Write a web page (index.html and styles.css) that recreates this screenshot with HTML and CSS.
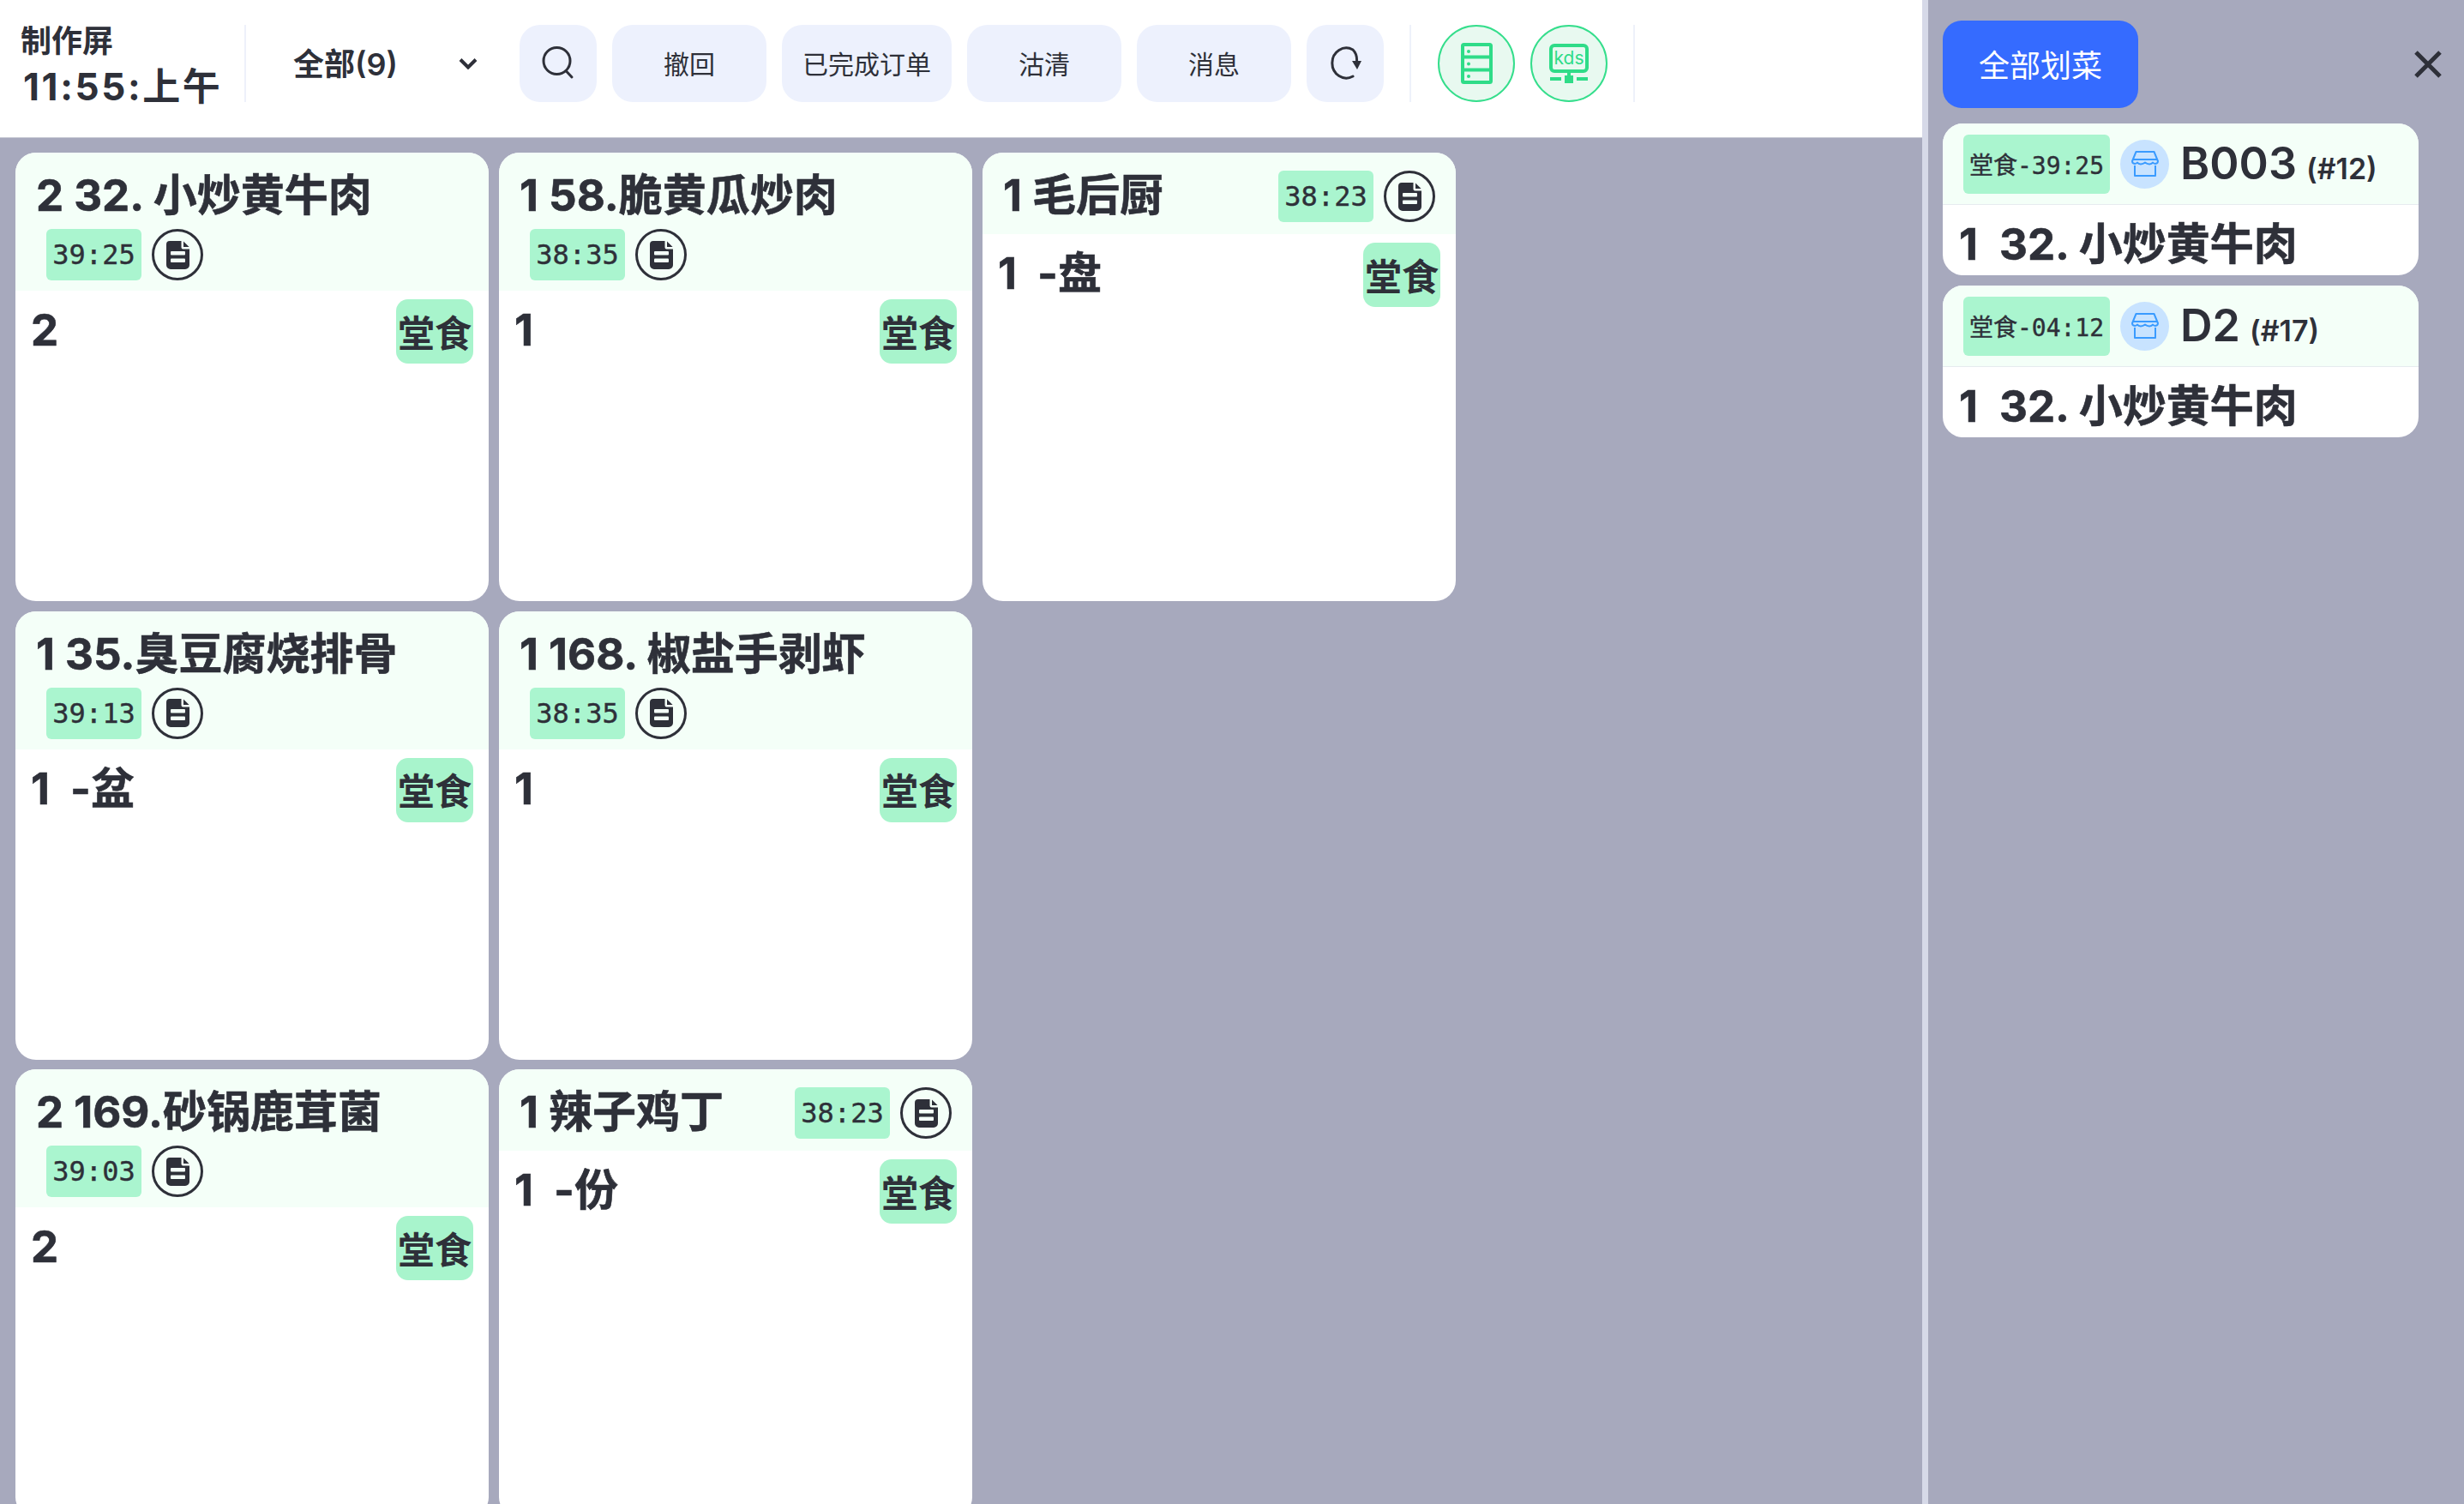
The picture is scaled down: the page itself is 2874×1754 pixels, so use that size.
FILE: index.html
```html
<!DOCTYPE html>
<html lang="zh-CN">
<head>
<meta charset="utf-8">
<title>制作屏</title>
<link rel="stylesheet" href="styles.css">
</head>
<body>
<svg class="defs" width="0" height="0" aria-hidden="true">
  <symbol id="doc" viewBox="0 0 27 33">
    <path fill="currentColor" d="M4 0H17.5V7.5a2 2 0 0 0 2 2H27V28a5 5 0 0 1-5 5H5a5 5 0 0 1-5-5V4a4 4 0 0 1 4-4Z"/>
    <path fill="currentColor" d="M20 0.5 26.6 7H20Z"/>
    <rect x="5" y="12" width="17" height="4.5" rx="1" fill="#f4fff8"/>
    <rect x="5" y="20.5" width="17" height="4.5" rx="1" fill="#f4fff8"/>
  </symbol>
  <symbol id="store" viewBox="0 0 32 30">
    <path fill="none" stroke="currentColor" stroke-width="2" stroke-linejoin="round" d="M5.5 1H26.5L31 12C31 15 27 16 25 13.5 23.500 16 19 16 16 13.500 13 16 8.500 16 7 13.500 5 16 1 15 1 12Z"/>
    <path fill="none" stroke="currentColor" stroke-width="2" d="M1.500 10H30.500"/>
    <path fill="none" stroke="currentColor" stroke-width="2" stroke-linejoin="round" d="M4 17V29H28V17"/>
  </symbol>
</svg>
<div class="app">
  <main class="main">
    <header class="topbar">
      <div class="clock">
        <div class="clock-title">制作屏</div>
        <div class="clock-time">11:55:上午</div>
      </div>
      <div class="rule"></div>
      <div class="filter">
        <span>全部(9)</span>
        <svg class="chevron" viewBox="0 0 24 14" width="24" height="14"><path d="M3 2.500 12 11.500 21 2.500" fill="none" stroke="currentColor" stroke-width="4"/></svg>
      </div>
      <div class="actions">
        <button class="btn btn-icon"><svg viewBox="0 0 40 40" width="40" height="40"><circle cx="18.500" cy="18" r="15.500" fill="none" stroke="currentColor" stroke-width="3"/><path d="M29 29.500 36 37" fill="none" stroke="currentColor" stroke-width="3" stroke-linecap="round"/></svg></button>
        <button class="btn">撤回</button>
        <button class="btn btn-wide">已完成订单</button>
        <button class="btn">沽清</button>
        <button class="btn">消息</button>
        <button class="btn btn-icon"><svg viewBox="0 0 40 40" width="40" height="40"><path d="M29 36A16.500 17.500 0 1 1 29 5C32 8 34 13 33.500 19" fill="none" stroke="currentColor" stroke-width="3" stroke-linecap="round"/><path d="M28 18H39L34 28Z" fill="currentColor"/></svg></button>
      </div>
      <div class="rule rule-mid"></div>
      <div class="modes">
        <button class="mode"><svg viewBox="0 0 37 48" width="37" height="48"><rect x="2" y="2" width="33" height="44" rx="1.500" fill="none" stroke="currentColor" stroke-width="4"/><path d="M2 16.500H35M2 31.500H35" stroke="currentColor" stroke-width="4"/><circle cx="9" cy="10" r="2" fill="currentColor"/><circle cx="9" cy="24.500" r="2" fill="currentColor"/><circle cx="9" cy="39" r="2" fill="currentColor"/></svg></button>
        <button class="mode"><svg viewBox="0 0 46 46" width="46" height="46"><rect x="2" y="2" width="42" height="30" rx="4" fill="none" stroke="currentColor" stroke-width="4"/><text x="23" y="24" class="kds">kds</text><path d="M23 32V40" stroke="currentColor" stroke-width="4"/><rect x="18" y="37" width="10" height="9" fill="currentColor"/><path d="M1 41H14M32 41H45" stroke="currentColor" stroke-width="4"/></svg></button>
      </div>
      <div class="rule rule-end"></div>
    </header>
    <div class="board">
      <div class="col">
        <article class="card">
          <div class="card-head stacked"><div class="title">2 32. 小炒黄牛肉</div><div class="meta"><span class="timer">39:25</span><span class="note"><svg><use href="#doc"/></svg></span></div></div>
          <div class="card-row"><span class="qty">2</span><span class="pill">堂食</span></div>
        </article>
        <article class="card">
          <div class="card-head stacked"><div class="title">1 35.臭豆腐烧排骨</div><div class="meta"><span class="timer">39:13</span><span class="note"><svg><use href="#doc"/></svg></span></div></div>
          <div class="card-row"><span class="qty"><span class="count">1</span> -盆</span><span class="pill">堂食</span></div>
        </article>
        <article class="card">
          <div class="card-head stacked"><div class="title">2 169.砂锅鹿茸菌</div><div class="meta"><span class="timer">39:03</span><span class="note"><svg><use href="#doc"/></svg></span></div></div>
          <div class="card-row"><span class="qty">2</span><span class="pill">堂食</span></div>
        </article>
      </div>
      <div class="col">
        <article class="card">
          <div class="card-head stacked"><div class="title">1 58.脆黄瓜炒肉</div><div class="meta"><span class="timer">38:35</span><span class="note"><svg><use href="#doc"/></svg></span></div></div>
          <div class="card-row"><span class="qty">1</span><span class="pill">堂食</span></div>
        </article>
        <article class="card">
          <div class="card-head stacked"><div class="title">1 168. 椒盐手剥虾</div><div class="meta"><span class="timer">38:35</span><span class="note"><svg><use href="#doc"/></svg></span></div></div>
          <div class="card-row"><span class="qty">1</span><span class="pill">堂食</span></div>
        </article>
        <article class="card">
          <div class="card-head inline"><div class="title">1 辣子鸡丁</div><div class="meta"><span class="timer">38:23</span><span class="note"><svg><use href="#doc"/></svg></span></div></div>
          <div class="card-row"><span class="qty"><span class="count">1</span> -份</span><span class="pill">堂食</span></div>
        </article>
      </div>
      <div class="col">
        <article class="card">
          <div class="card-head inline"><div class="title">1 毛后厨</div><div class="meta"><span class="timer">38:23</span><span class="note"><svg><use href="#doc"/></svg></span></div></div>
          <div class="card-row"><span class="qty"><span class="count">1</span> -盘</span><span class="pill">堂食</span></div>
        </article>
      </div>
    </div>
  </main>
  <aside class="side">
    <div class="side-top">
      <button class="serve-all">全部划菜</button>
      <svg class="close" viewBox="0 0 32 32" width="32" height="32"><path d="M2 2 30 30M30 2 2 30" fill="none" stroke="currentColor" stroke-width="5"/></svg>
    </div>
    <section class="ticket">
      <div class="ticket-head"><span class="ticket-tag">堂食-39:25</span><span class="store"><svg><use href="#store"/></svg></span><span class="table">B003</span><span class="seq">(#12)</span></div>
      <div class="ticket-body"><span class="ticket-count">1</span> 32. 小炒黄牛肉</div>
    </section>
    <section class="ticket">
      <div class="ticket-head"><span class="ticket-tag">堂食-04:12</span><span class="store"><svg><use href="#store"/></svg></span><span class="table">D2</span><span class="seq">(#17)</span></div>
      <div class="ticket-body"><span class="ticket-count">1</span> 32. 小炒黄牛肉</div>
    </section>
  </aside>
</div>
</body>
</html>
```
FILE: styles.css
```css
* { box-sizing: border-box; }
html, body { margin: 0; height: 100%; }
body {
  overflow: hidden;
  background: #a7a9bd;
  color: #2e3039;
  font-family: Inter, "Noto Sans CJK SC", sans-serif;
}
.defs { position: absolute; }
button { font: inherit; color: inherit; border: 0; padding: 0; }

.app { display: flex; height: 1754px; overflow: hidden; }
.main { width: 2242px; flex: none; display: flex; flex-direction: column; overflow: hidden; }

.topbar {
  height: 161px;
  flex: none;
  display: flex;
  align-items: center;
  background: #fff;
  border-bottom: 1px solid #c5c7d3;
  padding-bottom: 12px;
}
.clock { width: 285px; padding: 3px 0 0 24px; font-weight: 700; }
.clock-title { font-size: 36px; line-height: 48px; }
.clock-time { font-size: 44px; line-height: 54px; padding: 2px 0 0 3px; letter-spacing: 2.600px; font-weight: 700; white-space: nowrap; }
.rule { width: 2px; height: 90px; flex: none; background: #eef1fa; }
.filter {
  width: 319px;
  height: 90px;
  flex: none;
  display: flex;
  align-items: center;
  justify-content: space-between;
  padding: 0 48px 0 55px;
  font-size: 36px;
  font-weight: 600;
}
.filter span { position: relative; top: -2px; }
.chevron { flex: none; }
.actions { display: flex; gap: 18px; }
.btn {
  width: 180px;
  height: 90px;
  border-radius: 24px;
  background: #edf1fd;
  font-size: 30px;
  padding-bottom: 2px;
  display: flex;
  align-items: center;
  justify-content: center;
}
.btn-icon { width: 90px; }
.btn-wide { width: 198px; }
.rule-mid { margin-left: 30px; }
.modes { display: flex; gap: 18px; margin-left: 31px; }
.mode {
  width: 90px;
  height: 90px;
  border-radius: 50%;
  background: #e8f9f0;
  border: 2px solid #35de8c;
  color: #2fdc88;
  display: flex;
  align-items: center;
  justify-content: center;
}
.kds { font-family: Inter, sans-serif; font-size: 21px; fill: currentColor; text-anchor: middle; }
.rule-end { margin-left: 30px; }

.board { display: flex; gap: 12px; padding: 17px 18px 0; align-items: flex-start; }
.col { width: 552px; display: flex; flex-direction: column; gap: 11.500px; flex: none; }
.card { height: 523px; flex: none; border-radius: 24px; background: #fff; overflow: hidden; }
.card-head { background: #f4fff8; }
.stacked { height: 161px; padding: 19px 0 0 24px; }
.inline { height: 95px; display: flex; align-items: center; justify-content: space-between; padding: 0 24px 0 24px; }
.title { font-size: 51px; line-height: 62px; font-weight: 700; white-space: nowrap; -webkit-text-stroke: 0.600px currentColor; }
.inline .title { margin-top: 4px; }
.meta { display: flex; align-items: center; gap: 12px; }
.stacked .meta { margin: 8px 0 0 12px; }
.inline .meta { margin-top: 7px; }
.timer {
  width: 111px;
  height: 60px;
  border-radius: 6px;
  background: #aaf5cf;
  font-family: "DejaVu Sans Mono", monospace;
  font-size: 32px;
  -webkit-text-stroke: 0.400px currentColor;
  display: flex;
  align-items: center;
  justify-content: center;
}
.note {
  width: 60px;
  height: 60px;
  border-radius: 50%;
  border: 3px solid #2e3039;
  display: flex;
  align-items: center;
  justify-content: center;
}
.note svg { width: 27px; height: 33px; }
.card-row { display: flex; justify-content: space-between; align-items: flex-start; padding: 10px 18px 0 18px; }
.qty { font-size: 51px; line-height: 62px; font-weight: 700; margin-top: 5px; -webkit-text-stroke: 0.600px currentColor; }
.count { margin-right: 12px; }
.pill {
  width: 90px;
  height: 75px;
  border-radius: 14px;
  background: #a8f4cc;
  font-size: 43px;
  font-weight: 700;
  padding-bottom: 2px;
  display: flex;
  align-items: center;
  justify-content: center;
}

.side { flex: 1; border-left: 7px solid #d6d9e8; padding: 24px 0 0 17px; }
.side-top { display: flex; align-items: center; justify-content: space-between; width: 598px; margin-bottom: 18px; padding-right: 16px; }
.serve-all { width: 228px; height: 102px; border-radius: 22px; background: #356bff; color: #fff; font-size: 36px; padding-bottom: 2px; }
.close { flex: none; color: #2e3039; }
.ticket { width: 555px; height: 177px; border-radius: 24px; background: #fff; overflow: hidden; margin-bottom: 12px; }
.ticket-head {
  height: 95px;
  display: flex;
  align-items: center;
  padding-left: 24px;
  background: #f4fff8;
  border-bottom: 1px solid #e6ebef;
}
.ticket-tag {
  width: 171px;
  height: 69px;
  border-radius: 6px;
  background: #aaf5cf;
  font-family: "DejaVu Sans Mono", "Noto Sans CJK SC", monospace;
  font-size: 28px;
  -webkit-text-stroke: 0.400px currentColor;
  white-space: nowrap;
  display: flex;
  align-items: center;
  justify-content: center;
}
.store {
  width: 57px;
  height: 57px;
  margin-left: 12px;
  border-radius: 50%;
  background: #c8e3ff;
  color: #3a9bff;
  display: flex;
  align-items: center;
  justify-content: center;
}
.store svg { width: 32px; height: 30px; }
.table { margin-left: 13px; font-size: 52px; font-weight: 600; line-height: 62px; }
.seq { margin: 10px 0 0 11px; font-size: 34px; font-weight: 600; }
.ticket-body { padding: 5px 0 0 19px; font-size: 51px; line-height: 82px; font-weight: 700; white-space: nowrap; -webkit-text-stroke: 0.600px currentColor; }
.ticket-count { margin-right: 13px; }
```
